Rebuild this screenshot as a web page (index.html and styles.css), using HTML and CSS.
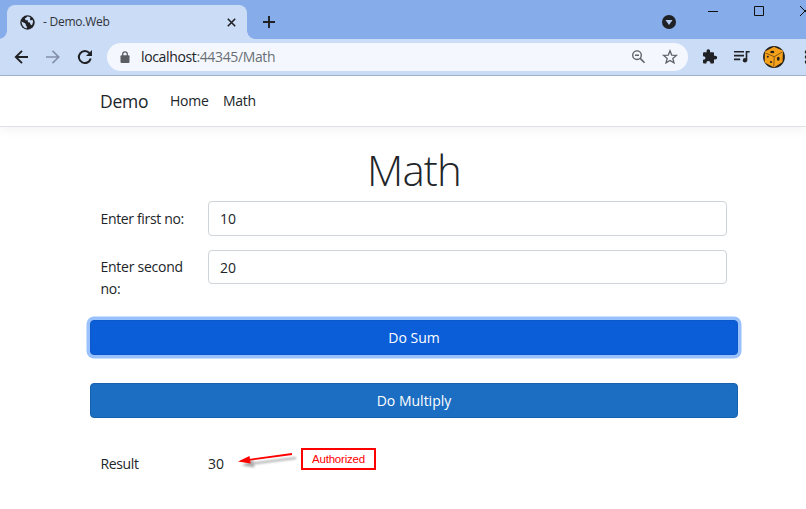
FILE: index.html
```html
<!DOCTYPE html>
<html lang="en">
<head>
<meta charset="utf-8">
<title>Demo.Web</title>
<link rel="stylesheet" href="styles.css">
</head>
<body>
<header class="tabstrip">
  <div class="tab">
    <svg class="globe" width="15" height="15" viewBox="0 0 15 15"><circle cx="7.5" cy="7.5" r="7.2" fill="#202124"/><path d="M1.5 6.500 5 8.300q1.200.8.8 2.200l1 .8v2.200Q2 12.800 1.500 6.500ZM7.300 1.600Q6 3 4.800 3.600L5.700 5.300 7.700 5.200 8 7.200 9.800 7.500 10.500 9.600 12 10.300Q14 7.500 12.600 4.800L10.600 5.500 9.900 3.800 10.500 2.500Q9 1.500 7.300 1.600Z" fill="#cbdcf6"/></svg>
    <span class="tab-title">- Demo.Web</span>
    <svg class="tab-close" width="9" height="9" viewBox="0 0 9 9"><path d="m.8.8 7.400 7.400M8.200.8.8 8.200" stroke="#202124" stroke-width="1.600"/></svg>
  </div>
  <svg class="new-tab" width="12" height="12" viewBox="0 0 12 12"><path d="M6 0v12M0 6h12" stroke="#202124" stroke-width="1.900"/></svg>
  <div class="window-controls">
    <svg width="145" height="39" viewBox="0 0 145 39"><circle cx="8" cy="22" r="7" fill="#202124"/><path d="M4.500 20h7L8 25Z" fill="#b4cbf2"/><path d="M47 11.500h10M93.500 6.500h9v9h-9ZM139 6l10 10M139 16l10-10" fill="none" stroke="#111"/></svg>
  </div>
</header>
<div class="toolbar">
  <svg class="nav-icons" width="80" height="16" viewBox="0 0 80 16" fill="none" stroke-width="1.900"><path d="M14 8H1.500M8 1.800 1.800 8 8 14.200" stroke="#202124"/><path d="M32 8h12.500M38.500 1.800 44.700 8l-6.200 6.200" stroke="#8390a8" stroke-width="1.700"/><path d="M75.500 4.200A6 6 0 1 0 76.700 9.500" stroke="#202124" stroke-width="2"/><path d="M78 1v6h-6Z" fill="#202124"/></svg>
  <div class="address">
    <svg class="lock" width="10" height="13" viewBox="0 0 10 13"><rect x=".5" y="4.200" width="9" height="7.800" rx="1" fill="#5b5e63"/><path d="M2.700 5V3.200a2.300 2.300 0 0 1 4.600 0V5" fill="none" stroke="#5b5e63" stroke-width="1.300"/></svg>
    <span class="url"><span class="host">localhost</span>:44345/Math</span>
    <svg class="address-icons" width="48" height="16" viewBox="0 0 48 16" fill="none" stroke="#5f6368" stroke-width="1.400"><circle cx="6" cy="6.200" r="4.300"/><path d="M4 6.200h4M9.200 9.400 13.500 13.800" stroke-width="1.600"/><path d="m39 1.800 1.700 4.300 4.700.3-3.600 3 1.200 4.500L39 11.400l-4 2.500 1.200-4.500-3.600-3 4.700-.3Z" stroke-width="1.300"/></svg>
  </div>
  <svg class="extensions" width="106" height="24" viewBox="0 0 106 24"><path d="M3 8.300q0-1 1-1h2.700q-.6-3.100 1.600-3.100t1.700 3.100h3q1 0 1 1v2.500q3.200-.6 3.200 1.800t-3.200 1.800v3.200q0 1-1 1h-2.600q.2-2.600-2-2.600t-2 2.600H4q-1 0-1-1v-2.800q2.500.1 2.500-1.800T3 11.200Z" fill="#202124"/><path d="M34 6.800h10M34 10.600h10M34 14.400h6.200M46.500 15V6.800h3.200" fill="none" stroke="#202124" stroke-width="1.600"/><circle cx="45" cy="15.300" r="2.200" fill="#202124"/><circle cx="74" cy="12" r="10.900" fill="#24201a"/><path d="M65.700 7 74 2.600l8.200 3.500-.4 10.600L74 21.500 65.400 17Z" fill="#f5a11c" stroke="#f5a11c" stroke-width="1.500" stroke-linejoin="round"/><path d="m65.500 8 8.700 3.700 8-4.700M74.200 11.700l-.4 10" fill="none" stroke="#6b4710" stroke-width=".8"/><g fill="#24201a"><ellipse cx="72.300" cy="7" rx="2.100" ry="1.300"/><circle cx="67.800" cy="11.800" r="1"/><circle cx="71" cy="17" r="1.100"/><ellipse cx="78.300" cy="13.700" rx="1.400" ry="2"/><circle cx="106.500" cy="7" r="1.700"/><circle cx="106.500" cy="12" r="1.700"/><circle cx="106.500" cy="17" r="1.700"/></g></svg>
</div>
<nav class="navbar">
  <a class="brand">Demo</a><a class="link home">Home</a><a class="link math">Math</a>
</nav>
<main class="content">
  <h1>Math</h1>
  <div class="row first"><label class="t-first">Enter first no:</label><input type="text" value="10"></div>
  <div class="row second"><label class="t-second">Enter second no:</label><input type="text" value="20"></div>
  <button class="btn sum">Do Sum</button>
  <button class="btn multiply">Do Multiply</button>
  <div class="result">
    <span class="result-label">Result</span><span class="result-value">30</span>
    <svg class="arrow" width="64" height="26" viewBox="0 0 64 26"><defs><filter id="soft" x="-20%" y="-30%" width="140%" height="180%"><feGaussianBlur stdDeviation="1"/></filter></defs><g transform="translate(4 4)" opacity=".4" filter="url(#soft)"><path d="M55 4 12 9.500" stroke="#333" stroke-width="1.800"/><path d="m1 11.500 11-6 1.500 8Z" fill="#333"/></g><path d="M55 4 12 9.800" stroke="#f00" stroke-width="1.800"/><path d="M1 11.500 12.500 6l1.200 7.500Z" fill="#f00"/></svg>
    <span class="note">Authorized</span>
  </div>
</main>
</body>
</html>
```
FILE: styles.css
```css
* { box-sizing: border-box; }
body {
  margin: 0;
  width: 806px;
  height: 509px;
  overflow: hidden;
  background: #fff;
  color: #212529;
  font: 14px/22px "Open Sans", "Noto Sans", sans-serif;
}
svg { display: block; flex: none; }
.tabstrip { display: flex; height: 39px; background: #86ace9; }
.tab {
  position: relative;
  display: flex;
  align-items: center;
  width: 240px;
  height: 34px;
  margin: 5px 0 0 7px;
  padding: 0 11px 0 13px;
  border-radius: 8px 8px 0 0;
  background: #cbdcf6;
}
.tab::before, .tab::after {
  content: "";
  position: absolute;
  bottom: 0;
  width: 8px;
  height: 8px;
}
.tab::before { left: -8px; background: radial-gradient(circle at 0 0, transparent 7.5px, #cbdcf6 8px); }
.tab::after { right: -8px; background: radial-gradient(circle at 100% 0, transparent 7.5px, #cbdcf6 8px); }
.tab-title { margin-left: 8px; font-size: 12px; letter-spacing: -.25px; color: #30343a; }
.tab-close { margin-left: auto; }
.new-tab { margin: 16px 0 0 16px; }
.window-controls { margin-left: auto; }
.toolbar {
  display: flex;
  align-items: center;
  height: 37px;
  padding-left: 14px;
  border-bottom: 1px solid #a2b4ce;
  background: #cbdcf6;
}
.address {
  display: flex;
  align-items: center;
  width: 581px;
  height: 28px;
  margin-left: 13px;
  padding: 0 9px 0 13px;
  border-radius: 14px;
  background: #f4f8fe;
}
.url { margin-left: 11px; font-size: 14px; letter-spacing: -.36px; color: #6b6f75; }
.host { color: #202124; }
.address-icons { margin-left: auto; }
.extensions { margin-left: 12px; }
.navbar {
  display: flex;
  align-items: center;
  height: 51px;
  padding-left: 100px;
  border-bottom: 1px solid #dee2e6;
  box-shadow: 0 3px 10px rgba(0, 0, 0, .055);
}
.brand { width: 70px; font-size: 17.5px; letter-spacing: -.25px; }
.link { letter-spacing: -.25px; }
.home { width: 53px; }
.content { width: 648px; margin: 0 0 0 90px; padding-top: 16px; }
h1 { height: 58px; margin: 0; text-align: center; font-size: 42px; font-weight: 300; line-height: 53px; letter-spacing: -.8px; }
.row { display: flex; padding: 0 11px; }
.first { height: 49px; }
.second { height: 70px; }
label { width: 107px; margin-left: -.5px; margin-right: .5px; padding: 7px 18px 0 0; }
.t-first { letter-spacing: -.35px; }
.t-second { padding-top: 6px; letter-spacing: -.25px; }
input {
  flex: 1;
  height: 35px;
  padding: 0 11px;
  border: 1px solid #ced4da;
  border-radius: 4px;
  color: #212529;
  font: inherit;
}
.second input { height: 34px; }
.btn {
  display: block;
  width: 648px;
  height: 35px;
  padding: 0;
  border: 1px solid #1861ac;
  border-radius: 4px;
  background: #1b6ec2;
  color: #fff;
  font: inherit;
}
.sum { border-color: #0a58ca; background: #0b5ed7; box-shadow: 0 0 0 3.5px #98c1fe; }
.multiply { margin-top: 28px; }
.result { display: flex; margin-top: 28px; padding-left: 11px; }
.result-label { width: 107px; padding-top: 7px; letter-spacing: -.35px; text-indent: -.5px; }
.result-value { width: 29px; padding-top: 7px; }
.arrow { margin-top: 4px; }
.note {
  width: 75px;
  height: 22px;
  margin-top: 2px;
  border: 2px solid #f00;
  color: #f00;
  text-align: center;
  font: 11.5px/18px "Liberation Sans", sans-serif;
  letter-spacing: -.2px;
}
```
